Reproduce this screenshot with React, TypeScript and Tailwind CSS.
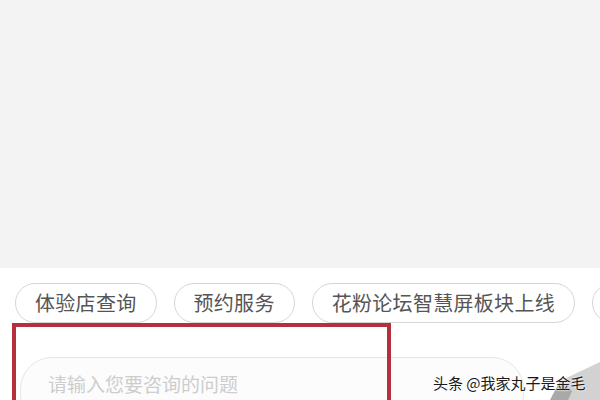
const chips = ["体验店查询", "预约服务", "花粉论坛智慧屏板块上线"];

export default function App() {
  return (
    <div
      className="relative w-[600px] h-[400px] overflow-hidden bg-white flex flex-col"
      style={{ fontFamily: '"Noto Sans CJK SC", "Noto Sans", sans-serif' }}
    >
      {/* chat area */}
      <div className="h-[268px] shrink-0 bg-[#f3f3f3]" />

      {/* quick question chips */}
      <div className="flex gap-[17px] pl-[15px] pt-[15px] whitespace-nowrap">
        {chips.map((c) => (
          <div
            key={c}
            className="h-[40px] shrink-0 flex items-center px-[19px] rounded-full border-[1.5px] border-[#d6d6d6] text-[20px] leading-none text-[#555] tracking-[0.3px]"
          >
            {c}
          </div>
        ))}
        {/* next chip, cut off by the screen edge */}
        <div className="h-[40px] w-[80px] shrink-0 rounded-full border-[1.5px] border-[#d6d6d6]" />
      </div>

      {/* input row */}
      <div className="flex items-start mt-[34px] pl-[20px]">
        <div className="w-[504px] h-[70px] shrink-0 rounded-[32px] border-[1.5px] border-[#e6e6e6] bg-[#fcfcfc] flex items-start pt-[16px] pl-[27px] text-[19px] leading-none text-[#cdcdcd]">
          请输入您要咨询的问题
        </div>
        <svg className="ml-[18px] mt-[4px] shrink-0" width="60" height="44" viewBox="0 0 60 44">
          <polygon points="6,43 18,20 60,0 60,44" fill="#d2d2d2" />
          <polygon points="6,43 18,20 30,30 24,44" fill="#a9a9a9" />
        </svg>
      </div>

      {/* annotation box */}
      <div className="absolute left-[12px] top-[323px] w-[379px] h-[100px] border-[4px] border-[#b3303c]" />

      {/* watermark */}
      <div
        className="absolute left-[433px] top-[375px] text-[15px] leading-none text-[#1a1a1a] whitespace-nowrap"
        style={{ textShadow: "0 0 2px #fff, 0 0 2px #fff" }}
      >
        头条 @我家丸子是金毛
      </div>
    </div>
  );
}
